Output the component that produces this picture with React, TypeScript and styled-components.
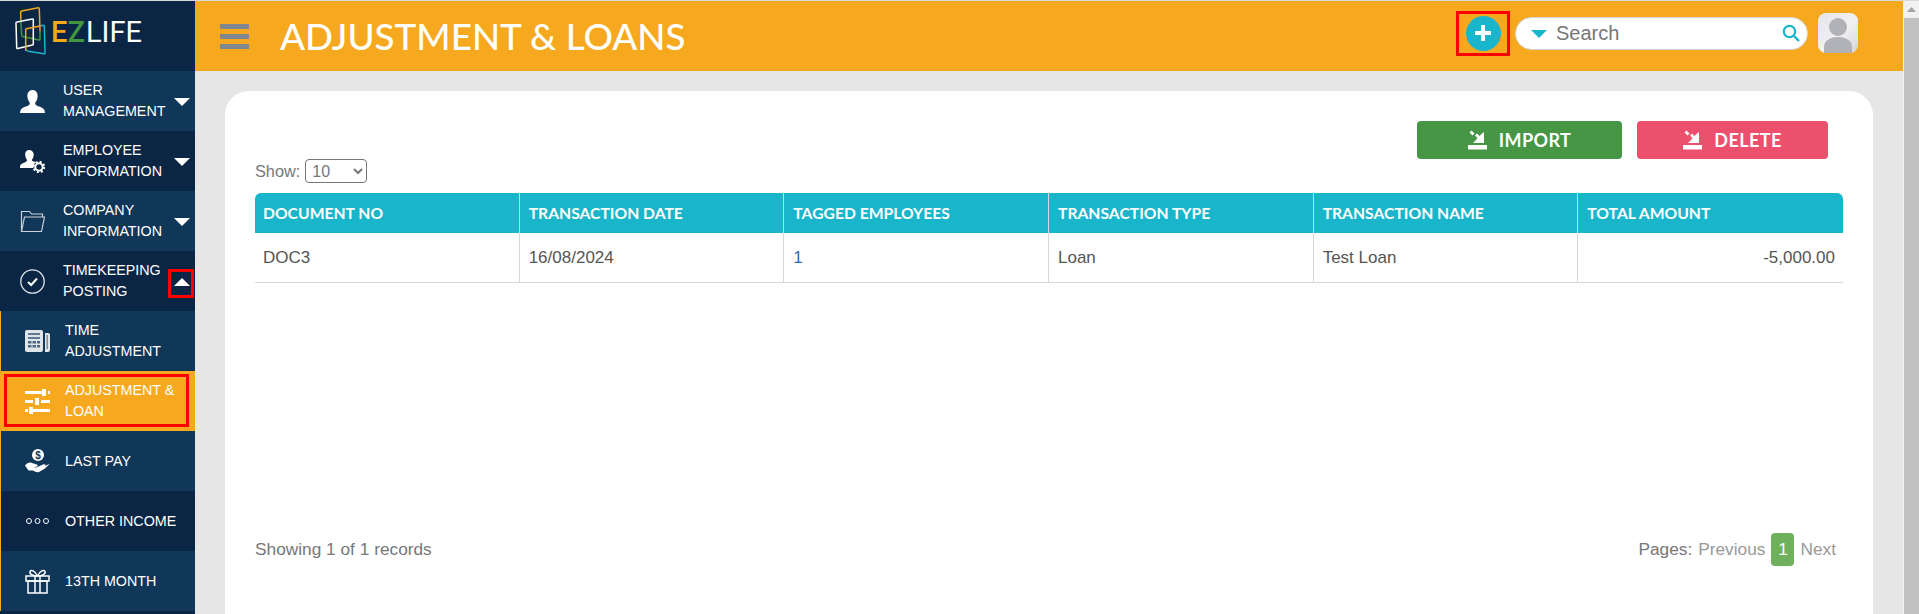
import React from 'react';
import styled, { createGlobalStyle } from 'styled-components';

const GlobalStyle = createGlobalStyle`
  html, body {
    margin: 0;
    padding: 0;
    height: 614px;
    overflow: hidden;
    background: #e6e6e6;
    font-family: 'Liberation Sans', Arial, sans-serif;
  }
`;

const Page = styled.div`
  display: flex;
  width: 1919px;
  height: 614px;
  overflow: hidden;
  border-top: 1px solid #d9d9d9;
  box-sizing: border-box;
`;

/* ---------- sidebar ---------- */

const Sidebar = styled.aside`
  flex: 0 0 195px;
  height: 613px;
  background: #0a2644;
  overflow: hidden;
`;

const LogoRow = styled.div`
  display: flex;
  align-items: center;
  height: 70px;
  padding: 0 0 8px 15px;
  box-sizing: border-box;
`;

const LogoText = styled.div`
  font-family: Roboto, 'Liberation Sans', sans-serif;
  font-size: 29px;
  line-height: 1;
  margin-left: 5px;
  color: #fff;
`;

const LogoE = styled.span`
  color: #f6a81c;
  font-weight: 500;
`;

const LogoZ = styled.span`
  color: #41963f;
  font-weight: 500;
  margin-right: 1px;
`;

const SubGroup = styled.div`
  border-left: 1px solid #f6a81c;
`;

const NavItem = styled.div<{ $tone: 'dark' | 'light' | 'active'; $sub?: boolean }>`
  position: relative;
  display: flex;
  align-items: center;
  height: 60px;
  box-sizing: border-box;
  padding-left: ${p => (p.$sub ? '24px' : '20px')};
  color: #fff;
  background: ${p => (p.$tone === 'dark' ? '#0a2644' : p.$tone === 'light' ? '#103658' : '#f6a91e')};
`;

const NavIcon = styled.span<{ $sub?: boolean }>`
  flex: 0 0 25px;
  width: 25px;
  height: 26px;
  margin-right: ${p => (p.$sub ? '15px' : '18px')};
  display: flex;
  align-items: center;
  justify-content: center;
`;

const NavLabel = styled.span<{ $wide?: boolean }>`
  font-size: 14.3px;
  line-height: 21px;
  width: ${p => (p.$wide ? '125px' : '108px')};
`;

const Caret = styled.span<{ $up?: boolean }>`
  position: absolute;
  right: 5px;
  top: 27px;
  width: 0;
  height: 0;
  border-left: 8px solid transparent;
  border-right: 8px solid transparent;
  ${p => (p.$up ? 'border-bottom: 8px solid #fff;' : 'border-top: 8px solid #fff;')}
`;

const CaretMark = styled.span`
  position: absolute;
  right: 1px;
  top: 18px;
  width: 26px;
  height: 29px;
  box-sizing: border-box;
  border: 3px solid #f00;
`;

const NavMark = styled.span`
  position: absolute;
  left: 3px;
  right: 6px;
  top: 3px;
  bottom: 4px;
  border: 3px solid #f00;
`;

/* ---------- main area ---------- */

const Main = styled.main`
  flex: 1;
  min-width: 0;
  display: flex;
  flex-direction: column;
`;

const Topbar = styled.header`
  flex: 0 0 70px;
  box-sizing: border-box;
  display: flex;
  align-items: center;
  background: #f6a91e;
  padding: 0 45px 6px 25px;
`;

const Burger = styled.div`
  display: flex;
  flex-direction: column;
  gap: 5px;
  width: 29px;
  margin-right: 31px;
  margin-top: 6px;
`;

const BurgerBar = styled.span`
  display: block;
  height: 5px;
  background: #7f8790;
`;

const Title = styled.h1`
  flex: 1;
  margin: 0;
  font-family: Lato, sans-serif;
  font-weight: 500;
  font-size: 36.8px;
  line-height: 1;
  color: #fff;
  margin-top: 6px;
`;

const MarkBox = styled.div`
  width: 54px;
  height: 45px;
  box-sizing: border-box;
  border: 3px solid #f00;
  display: flex;
  align-items: center;
  justify-content: center;
  margin-right: 5px;
`;

const PlusButton = styled.button`
  width: 35px;
  height: 35px;
  padding: 0;
  border: 0;
  border-radius: 50%;
  background: #19b5ca;
  display: flex;
  align-items: center;
  justify-content: center;
`;

const SearchBox = styled.div`
  display: flex;
  align-items: center;
  width: 293px;
  height: 33px;
  box-sizing: border-box;
  padding: 0 7px 0 15px;
  margin-right: 10px;
  background: #fff;
  border: 1px solid #d5d5d5;
  border-radius: 17px;
`;

const SearchCaret = styled.span`
  width: 0;
  height: 0;
  margin-top: 2px;
  margin-right: 9px;
  border-left: 8px solid transparent;
  border-right: 8px solid transparent;
  border-top: 8px solid #19b5ca;
`;

const SearchInput = styled.input`
  flex: 1;
  min-width: 0;
  border: 0;
  outline: 0;
  padding: 0;
  font-family: 'Liberation Sans', sans-serif;
  font-size: 20px;
  &::placeholder {
    color: #777;
    opacity: 1;
  }
`;

const Avatar = styled.div`
  width: 40px;
  height: 40px;
  border-radius: 8px;
  overflow: hidden;
  background: linear-gradient(135deg, #e4e5e8 0%, #f1f1f2 55%, #d4d5d8 100%);
`;

const Content = styled.div`
  flex: 1;
  min-height: 0;
  padding: 20px 30px 0 30px;
`;

const Card = styled.section`
  height: 640px;
  box-sizing: border-box;
  padding: 30px 30px 0 30px;
  background: #fff;
  border-radius: 24px 24px 0 0;
`;

const ActionRow = styled.div`
  display: flex;
  justify-content: flex-end;
  gap: 15px;
  padding-right: 15px;
`;

const ActionButton = styled.button<{ $color: string; $width: number }>`
  display: flex;
  align-items: center;
  justify-content: center;
  gap: 11px;
  width: ${p => p.$width}px;
  height: 38px;
  padding: 0;
  border: 0;
  border-radius: 4px;
  background: ${p => p.$color};
  color: #fff;
  font-family: Lato, sans-serif;
  font-weight: 700;
  font-size: 18px;
  letter-spacing: 0.4px;
`;

const ShowRow = styled.div`
  display: flex;
  align-items: center;
  gap: 5px;
  height: 24px;
  margin-bottom: 10px;
  font-size: 16.3px;
  color: #777;
`;

const ShowSelect = styled.select`
  width: 62px;
  height: 24px;
  box-sizing: border-box;
  padding: 0 0 0 2px;
  font-family: 'Liberation Sans', sans-serif;
  font-size: 16px;
  color: #777;
  background: #fff;
  border: 1px solid #767676;
  border-radius: 4px;
`;

const Table = styled.table`
  width: 100%;
  table-layout: fixed;
  border-collapse: separate;
  border-spacing: 0;
`;

const Th = styled.th`
  height: 40px;
  padding: 0 8px 0 9px;
  text-align: left;
  background: #19b5ca;
  color: #fff;
  font-family: Lato, sans-serif;
  font-weight: 700;
  font-size: 15.7px;
  border-right: 1px solid #d8d8d8;
  &:first-child {
    padding-left: 8px;
    border-top-left-radius: 6px;
  }
  &:last-child {
    border-right: 0;
    border-top-right-radius: 6px;
  }
`;

const Td = styled.td<{ $right?: boolean }>`
  height: 50px;
  box-sizing: border-box;
  padding: 0 8px 0 9px;
  font-size: 17px;
  color: #555;
  text-align: ${p => (p.$right ? 'right' : 'left')};
  border-right: 1px solid #d8d8d8;
  border-bottom: 1px solid #d8d8d8;
  &:first-child {
    padding-left: 8px;
  }
  &:last-child {
    border-right: 0;
  }
`;

const CountLink = styled.a`
  color: #2a6cb0;
  text-decoration: none;
`;

const Footer = styled.div`
  display: flex;
  align-items: center;
  justify-content: space-between;
  margin-top: 250px;
  height: 33px;
  padding-right: 7px;
  font-size: 17.3px;
  color: #777;
`;

const Pager = styled.div`
  display: flex;
  align-items: center;
  gap: 6px;
`;

const PageLink = styled.span`
  color: #999;
`;

const PageCurrent = styled.span`
  width: 23px;
  height: 33px;
  line-height: 33px;
  text-align: center;
  border-radius: 4px;
  background: #6fb05c;
  color: #fff;
`;

const ScrollTrack = styled.div`
  flex: 0 0 16px;
  height: 613px;
  display: flex;
  flex-direction: column;
  align-items: stretch;
  background: #f1f1f1;
  border-left: 1px solid #f1f1f1;
  box-sizing: border-box;
`;

const ScrollUp = styled.div`
  flex: 0 0 17px;
  display: flex;
  align-items: center;
  justify-content: center;
`;

const ScrollThumb = styled.div`
  flex: 1;
  background: #c1c1c1;
`;

/* ---------- drawings ---------- */

const UserIcon = () => (
  <svg width="25" height="23" viewBox="0 0 25 23" fill="#fff">
    <path d="M12.500 0C8.800 0 7.200 3 7.400 6.600c.2 2.400 1 4.600 2.300 6 .3 1.500-.2 2.500-1.700 3.200C5 17 1.500 17.800.500 20.500L0 23h25l-.5-2.500c-1-2.700-4.500-3.500-7.500-4.700-1.500-.7-2-1.700-1.700-3.200 1.300-1.400 2.100-3.600 2.300-6C17.800 3 16.200 0 12.500 0z" />
  </svg>
);

const EmployeeIcon = () => (
  <svg width="25" height="24" viewBox="0 0 25 24" fill="#fff">
    <path d="M9 1C6.200 1 5 3.200 5.200 6c.1 1.800.7 3.500 1.700 4.600.2 1.100-.2 1.900-1.300 2.400C3.400 14 .800 14.600.200 16.600L0 19h13.500c-.3-2.800.7-4.500 2.500-5.700-1.300-.5-2.800-.9-3.600-1.300-.5-.4-.6-.9-.4-1.400 1-1.100 1.600-2.800 1.700-4.600C13.900 3.200 11.800 1 9 1z" />
    <circle cx="19" cy="18" r="3.700" fill="none" stroke="#fff" strokeWidth="2" />
    <circle cx="19" cy="18" r="5.300" fill="none" stroke="#fff" strokeWidth="2" strokeDasharray="2 2.160" />
  </svg>
);

const FolderIcon = () => (
  <svg width="25" height="24" viewBox="0 0 25 24" fill="none" stroke="#c9d1d9" strokeWidth="1.200">
    <path d="M1.500 22.500V2.500h8l2 2.500h11v3" />
    <path d="M1.500 22.500L4.500 8h20l-3 14.500z" />
  </svg>
);

const CheckIcon = () => (
  <svg width="25" height="25" viewBox="0 0 25 25" fill="none" stroke="#fff">
    <circle cx="12.500" cy="12.500" r="11.700" strokeWidth="1.300" stroke="#dfe4e8" />
    <path d="M8 13l3.200 3L17 9.500" strokeWidth="2" />
  </svg>
);

const NewsIcon = () => (
  <svg width="25" height="22" viewBox="0 0 25 22">
    <rect x="0" y="0" width="18" height="22" rx="2" fill="#dfe4e8" />
    <rect x="3" y="3" width="12" height="2" fill="#103658" opacity="0.6" />
    <rect x="3" y="7" width="12" height="2" fill="#103658" opacity="0.6" />
    <rect x="3" y="11" width="3.500" height="2.500" fill="#103658" opacity="0.7" />
    <rect x="7.500" y="11" width="3.500" height="2.500" fill="#103658" opacity="0.7" />
    <rect x="12" y="11" width="3" height="2.500" fill="#103658" opacity="0.7" />
    <rect x="3" y="15" width="3.500" height="2.500" fill="#103658" opacity="0.7" />
    <rect x="7.500" y="15" width="3.500" height="2.500" fill="#103658" opacity="0.7" />
    <rect x="12" y="15" width="3" height="2.500" fill="#103658" opacity="0.7" />
    <path d="M20 3h3a2 2 0 0 1 2 2v15a2 2 0 0 1-2 2h-3z" fill="#dfe4e8" />
    <rect x="21.500" y="5" width="1.500" height="14" fill="#103658" opacity="0.5" />
  </svg>
);

const SlidersIcon = () => (
  <svg width="25" height="26" viewBox="0 0 25 26" fill="#fff">
    <rect x="0" y="3" width="17" height="3" />
    <rect x="17" y="1" width="4" height="7" rx="0.500" />
    <rect x="23" y="3" width="2" height="3" />
    <rect x="0" y="12" width="8" height="3" />
    <rect x="10" y="10" width="4" height="7" rx="0.500" />
    <rect x="16" y="12" width="9" height="3" />
    <rect x="0" y="21" width="3" height="3" />
    <rect x="4" y="19" width="4" height="7" rx="0.500" />
    <rect x="8" y="21" width="17" height="3" />
  </svg>
);

const HandIcon = () => (
  <svg width="25" height="24" viewBox="0 0 25 24">
    <circle cx="13" cy="6" r="6" fill="#fff" />
    <text x="13" y="9.500" textAnchor="middle" fontSize="10" fontWeight="700" fontFamily="'Liberation Sans', sans-serif" fill="#103658">$</text>
    <path d="M0 16.500c2-2.500 4.500-3.500 7-2.500l4 1.200c2 .2 2.500 2.300.3 2.600l-3 .2 3.200.6 6.500-3c2-.9 3.200.2 2 1.500L25 14.600l-5 5-6 3.400c-2 .6-4-.5-6.500-1.500H3.500z" fill="#fff" />
  </svg>
);

const DotsIcon = () => (
  <svg width="25" height="8" viewBox="0 0 25 8" fill="none" stroke="#fff" strokeWidth="1">
    <circle cx="4" cy="4" r="2.500" />
    <circle cx="12.500" cy="4" r="2.500" />
    <circle cx="21" cy="4" r="2.500" />
  </svg>
);

const GiftIcon = () => (
  <svg width="25" height="25" viewBox="0 0 25 25" fill="none" stroke="#fff" strokeWidth="1.500">
    <rect x="1" y="7" width="23" height="5" />
    <rect x="3" y="12" width="19" height="12" />
    <path d="M10 7v17M15 7v17" />
    <path d="M12.500 7C10 2 6 0 5 2.500S8 7 12.500 7zM12.500 7C15 2 19 0 20 2.500S17 7 12.500 7z" />
  </svg>
);

const ImportIcon = () => (
  <svg width="20" height="20" viewBox="0 0 20 20" fill="#fff">
    <rect x="0" y="15" width="19" height="4.500" />
    <path d="M16 2v11H5l3-3 1.500-2L7 5.500 9 3.500l2.500 2.500 2-2z" />
    <path d="M1.500 2.500L3.500 .5l3 3-2 2z" />
  </svg>
);

const SearchIcon = () => (
  <svg width="18" height="18" viewBox="0 0 18 18" fill="none" stroke="#19b5ca">
    <circle cx="7.500" cy="7.500" r="5.700" strokeWidth="2.200" />
    <path d="M11.800 11.800L17 17" strokeWidth="2.400" />
  </svg>
);

const PlusIcon = () => (
  <svg width="16" height="16" viewBox="0 0 16 16" fill="#fff">
    <rect x="6" y="0" width="4" height="16" rx="0.500" />
    <rect x="0" y="6" width="16" height="4" rx="0.500" />
  </svg>
);

const AvatarFigure = () => (
  <svg width="40" height="40" viewBox="0 0 40 40" fill="#b1b2b8">
    <circle cx="20" cy="14" r="9" />
    <path d="M6 40v-6c0-7 7-10 14-10s14 3 14 10v6z" />
  </svg>
);

const Logo = () => (
  <svg width="31" height="50" viewBox="0 0 31 50" fill="none" strokeWidth="1.500" strokeLinejoin="round" strokeLinecap="round">
    <path d="M5.700 13V5c0-.6.300-1 1-1.100L23.300.8c.6-.1 1 .2 1 .9L25 24" stroke="#f6a81c" />
    <path d="M5.700 13l1 15.300c0 .6.300 1 1 1.100L24 33c.6.100 1-.2 1-.8V24" stroke="#41963f" />
    <path d="M2 15l15.300-3.100c.6-.1 1 .2 1 .9V37c0 .6-.3 1-.9 1.100L2.700 41.500c-.6.100-1-.2-1-.8L1 16c0-.5.300-.9 1-1z" stroke="#fff" />
    <path d="M25 19l3.300-.7c.6-.1 1 .2 1 .9L30 46c0 .6-.3.900-.9.800l-16-2.600c-.6-.1-1.400-.5-1.800-1.200" stroke="#19b5ca" />
    <path d="M10.700 43V22.700c0-.5.300-.8.800-.9L25 19" stroke="#f6a81c" />
  </svg>
);

/* ---------- data ---------- */

const columns = ['DOCUMENT NO', 'TRANSACTION DATE', 'TAGGED EMPLOYEES', 'TRANSACTION TYPE', 'TRANSACTION NAME', 'TOTAL AMOUNT'];

const App: React.FC = () => (
  <>
    <GlobalStyle />
    <Page>
      <Sidebar>
        <LogoRow>
          <Logo />
          <LogoText>
            <LogoE>E</LogoE>
            <LogoZ>Z</LogoZ>
            LIFE
          </LogoText>
        </LogoRow>
        <NavItem $tone="light">
          <NavIcon><UserIcon /></NavIcon>
          <NavLabel>USER MANAGEMENT</NavLabel>
          <Caret />
        </NavItem>
        <NavItem $tone="dark">
          <NavIcon><EmployeeIcon /></NavIcon>
          <NavLabel>EMPLOYEE INFORMATION</NavLabel>
          <Caret />
        </NavItem>
        <NavItem $tone="light">
          <NavIcon><FolderIcon /></NavIcon>
          <NavLabel>COMPANY INFORMATION</NavLabel>
          <Caret />
        </NavItem>
        <NavItem $tone="dark">
          <NavIcon><CheckIcon /></NavIcon>
          <NavLabel>TIMEKEEPING POSTING</NavLabel>
          <CaretMark />
          <Caret $up />
        </NavItem>
        <SubGroup>
          <NavItem $tone="light" $sub>
            <NavIcon $sub><NewsIcon /></NavIcon>
            <NavLabel $wide>TIME ADJUSTMENT</NavLabel>
          </NavItem>
          <NavItem $tone="active" $sub>
            <NavMark />
            <NavIcon $sub><SlidersIcon /></NavIcon>
            <NavLabel $wide>ADJUSTMENT &amp; LOAN</NavLabel>
          </NavItem>
          <NavItem $tone="light" $sub>
            <NavIcon $sub><HandIcon /></NavIcon>
            <NavLabel $wide>LAST PAY</NavLabel>
          </NavItem>
          <NavItem $tone="dark" $sub>
            <NavIcon $sub><DotsIcon /></NavIcon>
            <NavLabel $wide>OTHER INCOME</NavLabel>
          </NavItem>
          <NavItem $tone="light" $sub>
            <NavIcon $sub><GiftIcon /></NavIcon>
            <NavLabel $wide>13TH MONTH</NavLabel>
          </NavItem>
        </SubGroup>
      </Sidebar>

      <Main>
        <Topbar>
          <Burger>
            <BurgerBar />
            <BurgerBar />
            <BurgerBar />
          </Burger>
          <Title>ADJUSTMENT &amp; LOANS</Title>
          <MarkBox>
            <PlusButton><PlusIcon /></PlusButton>
          </MarkBox>
          <SearchBox>
            <SearchCaret />
            <SearchInput placeholder="Search" />
            <SearchIcon />
          </SearchBox>
          <Avatar><AvatarFigure /></Avatar>
        </Topbar>

        <Content>
          <Card>
            <ActionRow>
              <ActionButton $color="#469646" $width={205}><ImportIcon />IMPORT</ActionButton>
              <ActionButton $color="#ec506d" $width={191}><ImportIcon />DELETE</ActionButton>
            </ActionRow>
            <ShowRow>
              Show:
              <ShowSelect defaultValue="10">
                <option value="10">10</option>
                <option value="25">25</option>
                <option value="50">50</option>
              </ShowSelect>
            </ShowRow>
            <Table>
              <thead>
                <tr>
                  {columns.map(c => <Th key={c}>{c}</Th>)}
                </tr>
              </thead>
              <tbody>
                <tr>
                  <Td>DOC3</Td>
                  <Td>16/08/2024</Td>
                  <Td><CountLink>1</CountLink></Td>
                  <Td>Loan</Td>
                  <Td>Test Loan</Td>
                  <Td $right>-5,000.00</Td>
                </tr>
              </tbody>
            </Table>
            <Footer>
              <span>Showing 1 of 1 records</span>
              <Pager>
                <span>Pages:</span>
                <PageLink>Previous</PageLink>
                <PageCurrent>1</PageCurrent>
                <PageLink>Next</PageLink>
              </Pager>
            </Footer>
          </Card>
        </Content>
      </Main>

      <ScrollTrack>
        <ScrollUp>
          <svg width="9" height="5" viewBox="0 0 9 5" fill="#a3a3a3"><path d="M4.500 0L9 5H0z" /></svg>
        </ScrollUp>
        <ScrollThumb />
      </ScrollTrack>
    </Page>
  </>
);

export default App;
